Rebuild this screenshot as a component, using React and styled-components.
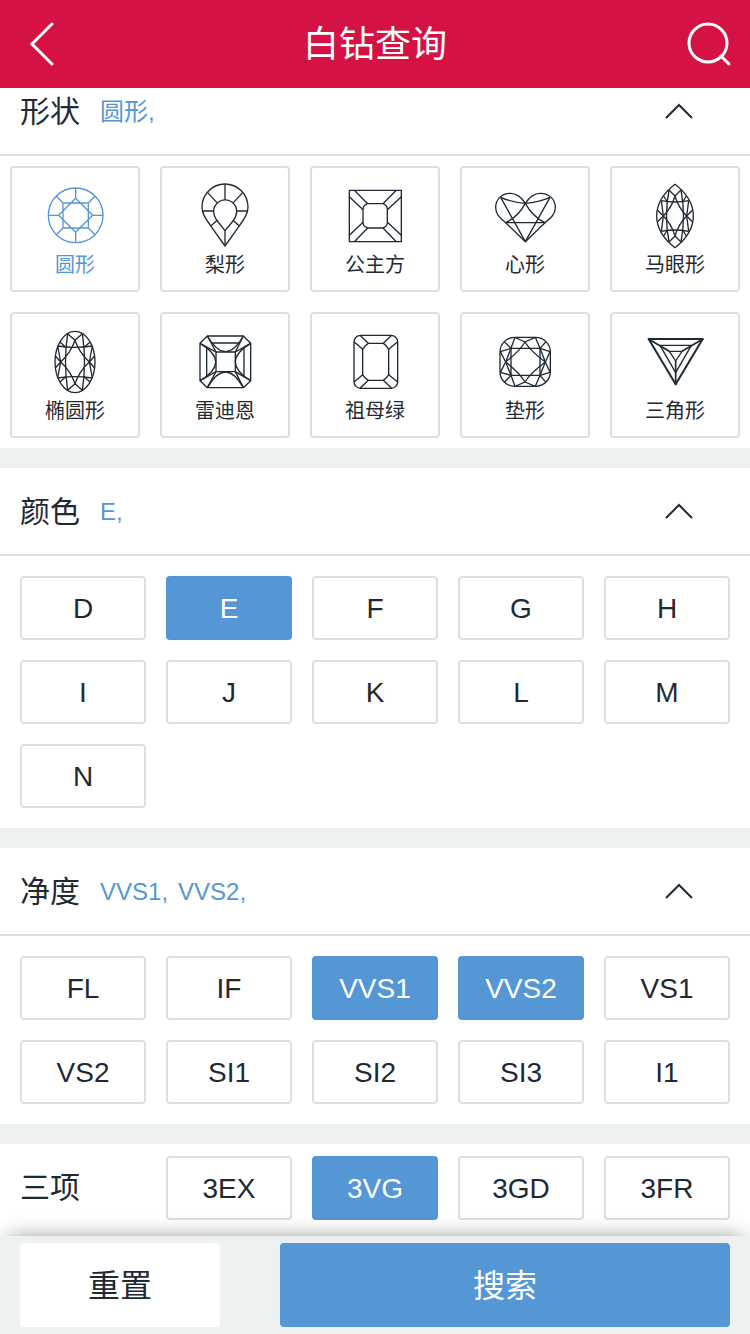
import React, { useState } from "react";
import styled, { createGlobalStyle, css } from "styled-components";

const color = {
  brand: "#d41243",
  blue: "#5596d5",
  ink: "#1f2933",
  line: "#dedede",
  mist: "#ecf0f1",
};

const GlobalStyle = createGlobalStyle`
  *, *::before, *::after { box-sizing: border-box; }
  body {
    margin: 0;
    background: ${color.mist};
    color: ${color.ink};
    font-family: "Liberation Sans", "Noto Sans CJK SC", sans-serif;
  }
  button {
    margin: 0;
    padding: 0;
    border: 0;
    background: none;
    color: inherit;
    font: inherit;
    cursor: pointer;
  }
  h1, h2 { margin: 0; font-weight: 400; }
`;

const Page = styled.div`
  display: flex;
  flex-direction: column;
  min-height: 100vh;
`;

const TopBar = styled.header`
  position: sticky;
  top: 0;
  z-index: 1;
  display: flex;
  align-items: center;
  justify-content: space-between;
  height: 88px;
  padding: 0 16px;
  background: ${color.brand};
  color: #fff;
`;

const PageTitle = styled.h1`
  padding-top: 2px;
  font-size: 36px;
  line-height: 48px;
`;

const IconButton = styled.button`
  display: flex;
  width: 52px;
  height: 52px;
`;

const Main = styled.main`
  display: flex;
  flex: 1;
  flex-direction: column;
  gap: 20px;
`;

const Section = styled.section`
  background: #fff;
`;

const SectionHead = styled.div`
  display: flex;
  align-items: center;
  gap: 20px;
  padding: ${(p) => (p.$tucked ? "0" : "20px")} 20px 18px;
  border-bottom: 2px solid ${color.line};
`;

const SectionTitle = styled.h2`
  font-size: 30px;
  line-height: 48px;
`;

const Chosen = styled.div`
  display: flex;
  flex: 1;
  gap: 10px;
  color: ${color.blue};
  font-size: 24px;
  line-height: 48px;
`;

const FoldButton = styled.button`
  display: flex;
  margin-right: 36px;
`;

const ShapeGrid = styled.div`
  display: grid;
  grid-template-columns: repeat(5, 1fr);
  gap: 20px;
  padding: 10px;
`;

const ShapeTile = styled.button`
  display: flex;
  flex-direction: column;
  align-items: center;
  padding: 12px 0 10px;
  border: 2px solid ${color.line};
  border-radius: 4px;
  color: ${(p) => (p.$on ? color.blue : color.ink)};
  font-size: 20px;
  line-height: 30px;
`;

const GemDrawing = styled.svg`
  width: 70px;
  height: 70px;
  fill: none;
  stroke: currentColor;
  stroke-width: 4;
  stroke-linejoin: round;
`;

const OptionGrid = styled.div`
  display: grid;
  grid-template-columns: repeat(5, 1fr);
  align-items: center;
  gap: 20px;
  padding: ${(p) => (p.$inline ? "12px 20px 16px" : "20px")};
`;

const Option = styled.button`
  height: 64px;
  padding-top: 2px;
  border: 2px solid ${color.line};
  border-radius: 4px;
  font-size: 28px;
  ${(p) =>
    p.$on &&
    css`
      border-color: ${color.blue};
      background: ${color.blue};
      color: #fff;
    `}
`;

const ActionBar = styled.footer`
  position: sticky;
  bottom: 0;
  display: flex;
  gap: 60px;
  padding: 7px 20px;
  background: ${color.mist};
  box-shadow: 0 -6px 20px -8px rgba(0, 0, 0, 0.45);
`;

const Action = styled.button`
  flex: ${(p) => (p.$primary ? "9" : "4")} 1 0;
  height: 84px;
  padding-bottom: 4px;
  border-radius: 4px;
  background: ${(p) => (p.$primary ? color.blue : "#fff")};
  color: ${(p) => (p.$primary ? "#fff" : color.ink)};
  font-size: 32px;
`;

const gems = {
  圆形: (
    <>
      <circle cx="227" cy="166" r="82" />
      <path d="M227 115L278 166L227 217L176 166ZM189 129H265V204H189Z" />
      <path d="M227 84V115M227 217V248M145 166H176M278 166H309M169 108L189 129M285 108L265 129M169 224L189 204M285 224L265 204" />
    </>
  ),
  梨形: (
    <>
      <path d="M225 258L181 196C166 175 156 160 156 141A69 69 0 0 1 294 141C294 160 284 175 269 196Z" />
      <path d="M225 212L202 183C194 173 191 164 191 154A34 34 0 0 1 260 154C260 164 257 173 249 183Z" />
      <path d="M225 73V119M225 212V258M173 98L201 128M278 98L250 128M157 153H191M260 153H294M182 198L202 181M268 198L249 181" />
    </>
  ),
  公主方: (
    <>
      <path d="M148 91H304V245H148Z" />
      <path d="M203 131H249Q262 135 262 149V187Q262 200 249 204H203Q189 200 189 187V149Q189 135 203 131Z" />
      <path d="M163 91L203 131M148 110L189 149M289 91L249 131M304 110L262 149M148 226L189 187M163 245L203 204M304 226L262 187M289 245L249 204" />
    </>
  ),
  心形: (
    <>
      <path d="M226 130C212 108 196 100 181 100C155 100 137 118 137 143C137 163 150 174 167 188L226 245L285 188C302 174 316 163 316 143C316 118 298 100 271 100C256 100 240 108 226 130Z" />
      <path d="M226 130C214 152 192 176 167 188H285C260 176 238 152 226 130M152 112Q186 127 226 130Q266 127 300 112M152 112L226 245L300 112" />
    </>
  ),
  马眼形: (
    <>
      <path d="M225 73C190 100 170 135 170 168C170 201 190 236 225 263C260 236 280 201 280 168C280 135 260 100 225 73Z" />
      <path d="M225 108C218 132 208 150 190 168C208 186 218 204 225 228C232 204 242 186 260 168C242 150 232 132 225 108Z" />
      <path d="M207 90L225 108L243 90M207 246L225 228L243 246" />
      <path d="M207 90Q192 168 207 246M243 90Q258 168 243 246" />
      <path d="M184 122Q225 130 266 122M184 214Q225 206 266 214M184 122L190 168L184 214M266 122L260 168L266 214" />
      <path d="M191 108L202 126M259 108L248 126M191 228L202 210M259 228L248 210M172 150L190 168L172 186M278 150L260 168L278 186" />
    </>
  ),
  椭圆形: (
    <>
      <ellipse cx="225" cy="168" rx="60" ry="92" />
      <path d="M225 103C215 132 202 150 182 168C202 186 215 204 225 233C235 204 248 186 268 168C248 150 235 132 225 103Z" />
      <path d="M203 83L225 103L247 83M203 253L225 233L247 253" />
      <path d="M203 83Q190 168 203 253M247 83Q260 168 247 253" />
      <path d="M173 120Q225 128 277 120M173 216Q225 208 277 216" />
      <path d="M180 108L197 124M270 108L253 124M180 228L197 212M270 228L253 212M173 120L182 168L173 216M277 120L268 168L277 216M166 150L182 168L166 186M284 150L268 168L284 186" />
    </>
  ),
  雷迪恩: (
    <>
      <path d="M172 90H280L302 112V224L280 245H172L150 224V112Z" />
      <path d="M198 138H256V197H198Z" />
      <path d="M184 111H268M170 122V214M282 122V214" />
      <path d="M172 90Q227 184 280 90M172 245Q227 151 280 245M150 112Q244 168 150 224M302 112Q210 168 302 224" />
      <path d="M172 90L198 138L150 112M280 90L256 138L302 112M172 245L198 197L150 224M280 245L256 197L302 224" />
    </>
  ),
  祖母绿: (
    <>
      <rect x="162" y="88" width="131" height="159" rx="20" />
      <path d="M205 112H250Q260 118 266 130V206Q260 217 250 223H205Q194 217 188 206V130Q194 118 205 112Z" />
      <path d="M180 88L205 112M162 107L188 130M275 88L250 112M293 107L266 130M180 247L205 223M162 228L188 206M275 247L250 223M293 228L266 206" />
    </>
  ),
  垫形: (
    <>
      <rect x="150" y="94" width="151" height="147" rx="44" />
      <path d="M225 108C212 130 190 150 167 168C190 186 212 206 225 228C238 206 262 186 286 168C262 150 238 130 225 108Z" />
      <path d="M183 127H270M183 208H270M183 127V208M270 127V208" />
      <path d="M195 94L225 108L256 94M195 241L225 228L256 241M151 137L167 168L151 199M300 137L286 168L300 199" />
      <path d="M195 94L183 127L151 137M256 94L270 127L300 137M195 241L183 208L151 199M256 241L270 208L300 199M163 107L183 127M288 107L270 127M163 229L183 208M288 229L270 208" />
      <path d="M183 127L167 168L183 208M270 127L286 168L270 208" />
    </>
  ),
  三角形: (
    <>
      <path d="M146 99H308L227 235Z" strokeWidth="6" />
      <path d="M180 118H274L227 200Z" />
      <path d="M208 136H246L227 165Z" />
      <path d="M144 98L208 136M310 98L246 136M227 165V237" strokeWidth="5" />
    </>
  ),
};

const shapes = Object.keys(gems);
const colors = ["D", "E", "F", "G", "H", "I", "J", "K", "L", "M", "N"];
const clarities = ["FL", "IF", "VVS1", "VVS2", "VS1", "VS2", "SI1", "SI2", "SI3", "I1"];
const grades = ["3EX", "3VG", "3GD", "3FR"];

const initial = { shape: ["圆形"], color: ["E"], clarity: ["VVS1", "VVS2"], grade: ["3VG"] };
const none = { shape: [], color: [], clarity: [], grade: [] };

function Heading({ title, chosen, open, onFold, tucked }) {
  return (
    <SectionHead $tucked={tucked}>
      <SectionTitle>{title}</SectionTitle>
      <Chosen>
        {chosen.map((name) => (
          <span key={name}>{name},</span>
        ))}
      </Chosen>
      <FoldButton type="button" aria-label={title} aria-expanded={open} onClick={onFold}>
        <svg width="30" height="30" viewBox="0 0 30 30" fill="none" stroke="currentColor" strokeWidth="2">
          <path d={open ? "M2 21L15 8L28 21" : "M2 9L15 22L28 9"} />
        </svg>
      </FoldButton>
    </SectionHead>
  );
}

function Options({ names, chosen, onToggle }) {
  return names.map((name) => {
    const on = chosen.includes(name);
    return (
      <Option key={name} type="button" $on={on} aria-pressed={on} onClick={() => onToggle(name)}>
        {name}
      </Option>
    );
  });
}

export default function App() {
  const [picked, setPicked] = useState(initial);
  const [folded, setFolded] = useState({});

  const toggle = (group) => (name) =>
    setPicked((all) => ({
      ...all,
      [group]: all[group].includes(name)
        ? all[group].filter((n) => n !== name)
        : [...all[group], name],
    }));
  const fold = (group) => () => setFolded((all) => ({ ...all, [group]: !all[group] }));

  return (
    <Page>
      <GlobalStyle />
      <TopBar>
        <IconButton type="button" aria-label="返回">
          <svg width="52" height="52" viewBox="0 0 52 52" fill="none" stroke="currentColor" strokeWidth="3">
            <path d="M36 6L16 26L36 46" strokeLinecap="round" />
          </svg>
        </IconButton>
        <PageTitle>白钻查询</PageTitle>
        <IconButton type="button" aria-label="查询">
          <svg width="52" height="52" viewBox="0 0 52 52" fill="none" stroke="currentColor" strokeWidth="3">
            <circle cx="26" cy="25" r="19" />
            <path d="M39 38L47 46" strokeLinecap="round" />
          </svg>
        </IconButton>
      </TopBar>

      <Main>
        <Section>
          <Heading title="形状" chosen={picked.shape} open={!folded.shape} onFold={fold("shape")} tucked />
          {!folded.shape && (
            <ShapeGrid>
              {shapes.map((name) => {
                const on = picked.shape.includes(name);
                return (
                  <ShapeTile
                    key={name}
                    type="button"
                    $on={on}
                    aria-pressed={on}
                    onClick={() => toggle("shape")(name)}
                  >
                    <GemDrawing viewBox="120 60 210 210" aria-hidden="true">
                      {gems[name]}
                    </GemDrawing>
                    {name}
                  </ShapeTile>
                );
              })}
            </ShapeGrid>
          )}
        </Section>

        <Section>
          <Heading title="颜色" chosen={picked.color} open={!folded.color} onFold={fold("color")} />
          {!folded.color && (
            <OptionGrid>
              <Options names={colors} chosen={picked.color} onToggle={toggle("color")} />
            </OptionGrid>
          )}
        </Section>

        <Section>
          <Heading title="净度" chosen={picked.clarity} open={!folded.clarity} onFold={fold("clarity")} />
          {!folded.clarity && (
            <OptionGrid>
              <Options names={clarities} chosen={picked.clarity} onToggle={toggle("clarity")} />
            </OptionGrid>
          )}
        </Section>

        <Section>
          <OptionGrid $inline>
            <SectionTitle>三项</SectionTitle>
            <Options names={grades} chosen={picked.grade} onToggle={toggle("grade")} />
          </OptionGrid>
        </Section>
      </Main>

      <ActionBar>
        <Action type="button" onClick={() => setPicked(none)}>
          重置
        </Action>
        <Action type="button" $primary>
          搜索
        </Action>
      </ActionBar>
    </Page>
  );
}
